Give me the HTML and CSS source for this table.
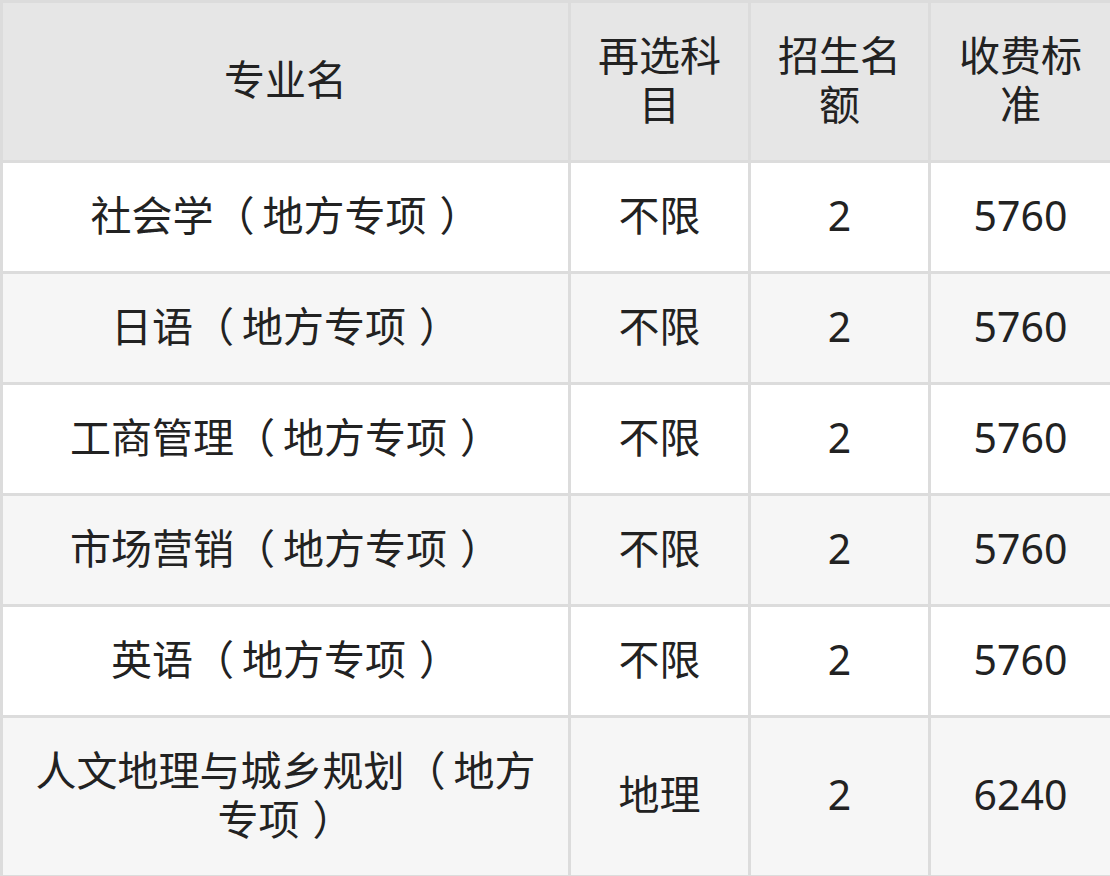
FILE: index.html
```html
<!DOCTYPE html>
<html lang="zh">
<head>
<meta charset="utf-8">
<link rel="stylesheet" href="styles.css">
</head>
<body>
<table class="tbl">
  <colgroup>
    <col class="c1"><col class="c2"><col class="c3"><col class="c4">
  </colgroup>
  <thead>
    <tr class="head"><th>专业名</th><th>再选科目</th><th>招生名额</th><th>收费标准</th></tr>
  </thead>
  <tbody>
    <tr class="row"><td>社会学<span class="po">（</span>地方专项<span class="pc">）</span></td><td>不限</td><td>2</td><td>5760</td></tr>
    <tr class="row alt"><td>日语<span class="po">（</span>地方专项<span class="pc">）</span></td><td>不限</td><td>2</td><td>5760</td></tr>
    <tr class="row"><td>工商管理<span class="po">（</span>地方专项<span class="pc">）</span></td><td>不限</td><td>2</td><td>5760</td></tr>
    <tr class="row alt"><td>市场营销<span class="po">（</span>地方专项<span class="pc">）</span></td><td>不限</td><td>2</td><td>5760</td></tr>
    <tr class="row"><td>英语<span class="po">（</span>地方专项<span class="pc">）</span></td><td>不限</td><td>2</td><td>5760</td></tr>
    <tr class="row alt tall"><td>人文地理与城乡规划<span class="po">（</span>地方专项<span class="pc">）</span></td><td>地理</td><td>2</td><td>6240</td></tr>
  </tbody>
</table>
</body>
</html>
```

FILE: styles.css
```css
html, body {
  margin: 0;
  padding: 0;
  background: #ffffff;
}
.tbl {
  width: 1110px;
  border-collapse: collapse;
  table-layout: fixed;
  font-family: "Noto Sans", "Noto Sans CJK SC", sans-serif;
  font-size: 41px;
  line-height: 49px;
  color: #222222;
  border: 3px solid #dcdcdc;
}
.c1 { width: 568px; }
.c2 { width: 180px; }
.c3 { width: 180px; }
.c4 { width: 182px; }
.tbl th, .tbl td {
  border: 3px solid #dcdcdc;
  text-align: center;
  vertical-align: middle;
  padding: 0 20px 4px;
  font-weight: 400;
}
.po {
  margin-right: 8px;
}
.pc {
  margin-left: 13px;
}
.head th {
  background: #e6e6e6;
  height: 153px;
}
.row td {
  background: #ffffff;
  height: 104px;
}
.row.alt td {
  background: #f6f6f6;
}
.row.tall td {
  height: 153px;
}
```
